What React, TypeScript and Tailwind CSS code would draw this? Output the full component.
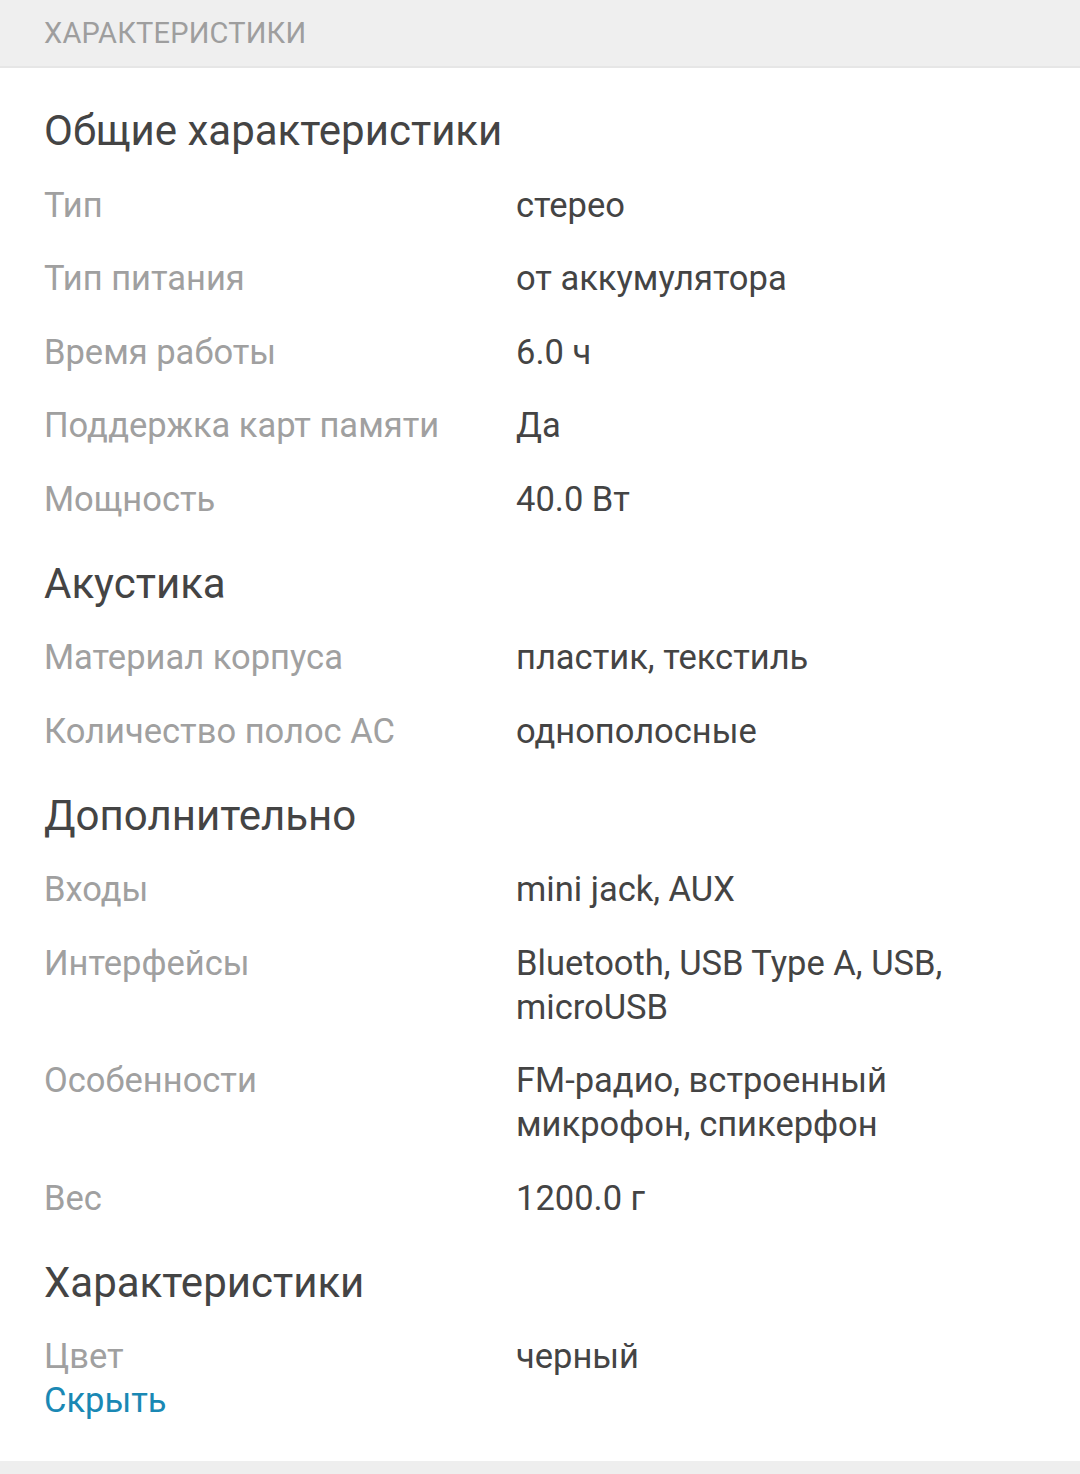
type Row = { label: string; value: string }
type Group = { title: string; rows: Row[] }

const groups: Group[] = [
  {
    title: 'Общие характеристики',
    rows: [
      { label: 'Тип', value: 'стерео' },
      { label: 'Тип питания', value: 'от аккумулятора' },
      { label: 'Время работы', value: '6.0 ч' },
      { label: 'Поддержка карт памяти', value: 'Да' },
      { label: 'Мощность', value: '40.0 Вт' },
    ],
  },
  {
    title: 'Акустика',
    rows: [
      { label: 'Материал корпуса', value: 'пластик, текстиль' },
      { label: 'Количество полос АС', value: 'однополосные' },
    ],
  },
  {
    title: 'Дополнительно',
    rows: [
      { label: 'Входы', value: 'mini jack, AUX' },
      { label: 'Интерфейсы', value: 'Bluetooth, USB Type A, USB, microUSB' },
      { label: 'Особенности', value: 'FM-радио, встроенный микрофон, спикерфон' },
      { label: 'Вес', value: '1200.0 г' },
    ],
  },
  {
    title: 'Характеристики',
    rows: [{ label: 'Цвет', value: 'черный' }],
  },
]

export default function App() {
  return (
    <div className="min-h-[1474px] bg-[#eeeeee] font-['Roboto',sans-serif]">
      {/* Header */}
      <div className="h-[68px] border-b-2 border-[#e6e6e6] bg-[#efefef] px-[44px] flex items-center">
        <span className="text-[29px] text-[#9e9e9e] tracking-[0.2px] leading-none">ХАРАКТЕРИСТИКИ</span>
      </div>

      <div className="bg-white px-[44px] pt-[15px] pb-[39px]">
        {groups.map((g, gi) => (
          <div key={gi}>
            <h2 className="pt-[24px] pb-[13px] text-[42px] leading-[48px] text-[#444444] font-normal">
              {g.title}
            </h2>
            {g.rows.map((r, ri) => {
              const last = gi === groups.length - 1 && ri === g.rows.length - 1
              return (
                <div
                  key={ri}
                  className={
                    last
                      ? 'flex pt-[14.75px] text-[34.5px] leading-[44px]'
                      : 'flex py-[14.75px] text-[34.5px] leading-[44px]'
                  }
                >
                  <div className="w-[472px] shrink-0 text-[#a0a0a0]">{r.label}</div>
                  <div className="w-[460px] text-[#444444]">{r.value}</div>
                </div>
              )
            })}
          </div>
        ))}
        <div className="text-[34.5px] leading-[44px] text-[#1a88b4]">Скрыть</div>
      </div>
    </div>
  )
}
